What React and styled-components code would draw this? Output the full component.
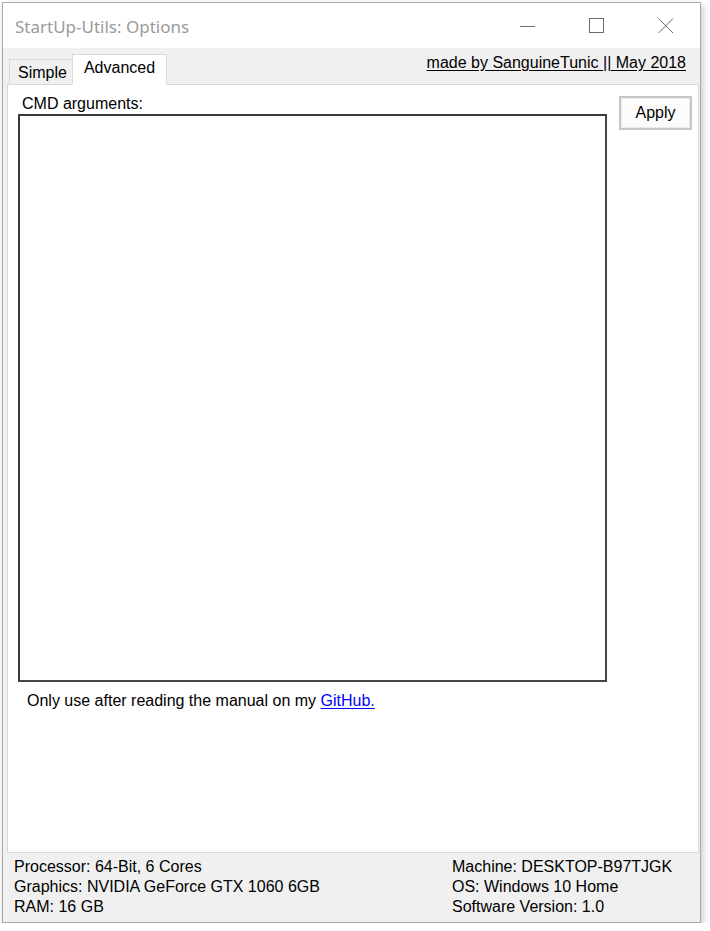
import React from 'react';
import styled, { createGlobalStyle } from 'styled-components';

const GlobalStyle = createGlobalStyle`
  html, body {
    margin: 0;
    padding: 0;
    background: #ffffff;
  }
  body {
    font-family: "Liberation Sans", Arial, sans-serif;
  }
`;

const StyledWindow = styled('div')`
  margin: 2px 0 0 2px;
  width: 699px;
  height: 921px;
  box-sizing: border-box;
  border: 1px solid #a9a9a9;
  box-shadow: 2px 3px 7px rgba(0, 0, 0, 0.22);
  display: flex;
  flex-direction: column;
  background: #f0f0f0;
`;

const StyledTitleBar = styled('div')`
  height: 45px;
  flex-shrink: 0;
  display: flex;
  align-items: center;
  background: #ffffff;
`;

const StyledTitle = styled('div')`
  flex-grow: 1;
  padding-left: 12px;
  padding-top: 2px;
  font-family: "Noto Sans", "Open Sans", sans-serif;
  font-size: 17px;
  color: #9a9a9a;
`;

const StyledCaptionButton = styled('div')`
  width: 69px;
  height: 45px;
  display: flex;
  align-items: center;
  justify-content: center;
`;

const StyledFormBody = styled('div')`
  flex-grow: 1;
  display: flex;
  flex-direction: column;
  font-size: 16px;
  color: #000000;
`;

const StyledTabStrip = styled('div')`
  height: 36px;
  flex-shrink: 0;
  display: flex;
  align-items: flex-end;
  padding: 0 14px 0 6px;
`;

const StyledTab = styled('div')`
  box-sizing: border-box;
  height: ${props => (props.active ? '31px' : '26px')};
  padding: ${props => (props.active ? '4px 11px 0 11px' : '4px 5px 0 8px')};
  background: ${props => (props.active ? '#ffffff' : '#f0f0f0')};
  border: 1px solid #d9d9d9;
  border-bottom: ${props => (props.active ? '1px solid #ffffff' : '1px solid #d9d9d9')};
  border-right: ${props => (props.active ? '1px solid #d9d9d9' : 'none')};
  margin-bottom: -1px;
  position: relative;
  z-index: ${props => (props.active ? 2 : 1)};
`;

const StyledCredit = styled('a')`
  margin-left: auto;
  align-self: flex-start;
  margin-top: 6px;
  color: #000000;
  text-decoration: underline;
  text-underline-offset: 2px;
`;

const StyledTabPanel = styled('div')`
  flex-shrink: 0;
  height: 769px;
  margin: 0 1px 0 4px;
  box-sizing: border-box;
  background: #ffffff;
  border: 1px solid #d9d9d9;
  position: relative;
  z-index: 1;
  display: flex;
  padding: 9px 4px 0 10px;
`;

const StyledMainColumn = styled('div')`
  width: 589px;
  display: flex;
  flex-direction: column;
`;

const StyledLabel = styled('div')`
  margin-left: 4px;
  line-height: 20px;
  height: 20px;
`;

const StyledTextArea = styled('textarea')`
  width: 589px;
  height: 568px;
  box-sizing: border-box;
  border: 2px solid #454545;
  border-top-color: #3a3a3a;
  border-left-color: #3a3a3a;
  resize: none;
  outline: none;
  margin: 0;
  background: #ffffff;
  font-family: inherit;
  font-size: 16px;
`;

const StyledNote = styled('div')`
  margin: 9px 0 0 9px;
  line-height: 20px;
`;

const StyledLink = styled('a')`
  color: #0000ff;
  text-decoration: underline;
  text-underline-offset: 2px;
`;

const StyledButton = styled('button')`
  margin: 2px 0 0 12px;
  width: 73px;
  height: 34px;
  box-sizing: border-box;
  border: 2px solid #c6c6c6;
  box-shadow: inset 0 0 0 1px #ececec;
  background: #fcfcfc;
  font-family: inherit;
  font-size: 16px;
  color: #000000;
  padding: 0;
`;

const StyledStatusBar = styled('div')`
  flex-grow: 1;
  display: flex;
  padding: 4px 0 0 11px;
  line-height: 20px;
`;

const StyledStatusColumn = styled('div')`
  width: ${props => props.width || 'auto'};
`;

const CaptionIcon = ({ kind }) => (
  <StyledCaptionButton>
    <svg width="16" height="16" viewBox="0 0 16 16">
      {kind === 'min' && (
        <line x1="0" y1="8.5" x2="15" y2="8.5" stroke="#6b6b6b" strokeWidth="1" />
      )}
      {kind === 'max' && (
        <rect x="0.5" y="0.5" width="14" height="14" fill="none" stroke="#6b6b6b" strokeWidth="1" />
      )}
      {kind === 'close' && (
        <path d="M0.5 0.5 L15 15 M15 0.5 L0.5 15" stroke="#6b6b6b" strokeWidth="1" fill="none" />
      )}
    </svg>
  </StyledCaptionButton>
);

const App = () => {
  const statusLeft = [
    'Processor: 64-Bit, 6 Cores',
    'Graphics: NVIDIA GeForce GTX 1060 6GB',
    'RAM: 16 GB',
  ];
  const statusRight = [
    'Machine: DESKTOP-B97TJGK',
    'OS: Windows 10 Home',
    'Software Version: 1.0',
  ];

  return (
    <>
      <GlobalStyle />
      <StyledWindow>
        <StyledTitleBar>
          <StyledTitle>StartUp-Utils: Options</StyledTitle>
          <CaptionIcon kind="min" />
          <CaptionIcon kind="max" />
          <CaptionIcon kind="close" />
        </StyledTitleBar>

        <StyledFormBody>
          <StyledTabStrip>
            <StyledTab>Simple</StyledTab>
            <StyledTab active>Advanced</StyledTab>
            <StyledCredit>made by SanguineTunic || May 2018</StyledCredit>
          </StyledTabStrip>

          <StyledTabPanel>
            <StyledMainColumn>
              <StyledLabel>CMD arguments:</StyledLabel>
              <StyledTextArea />
              <StyledNote>
                Only use after reading the manual on my <StyledLink>GitHub.</StyledLink>
              </StyledNote>
            </StyledMainColumn>
            <StyledButton>Apply</StyledButton>
          </StyledTabPanel>

          <StyledStatusBar>
            <StyledStatusColumn width="438px">
              {statusLeft.map(line => (
                <div key={line}>{line}</div>
              ))}
            </StyledStatusColumn>
            <StyledStatusColumn>
              {statusRight.map(line => (
                <div key={line}>{line}</div>
              ))}
            </StyledStatusColumn>
          </StyledStatusBar>
        </StyledFormBody>
      </StyledWindow>
    </>
  );
};

export default App;
